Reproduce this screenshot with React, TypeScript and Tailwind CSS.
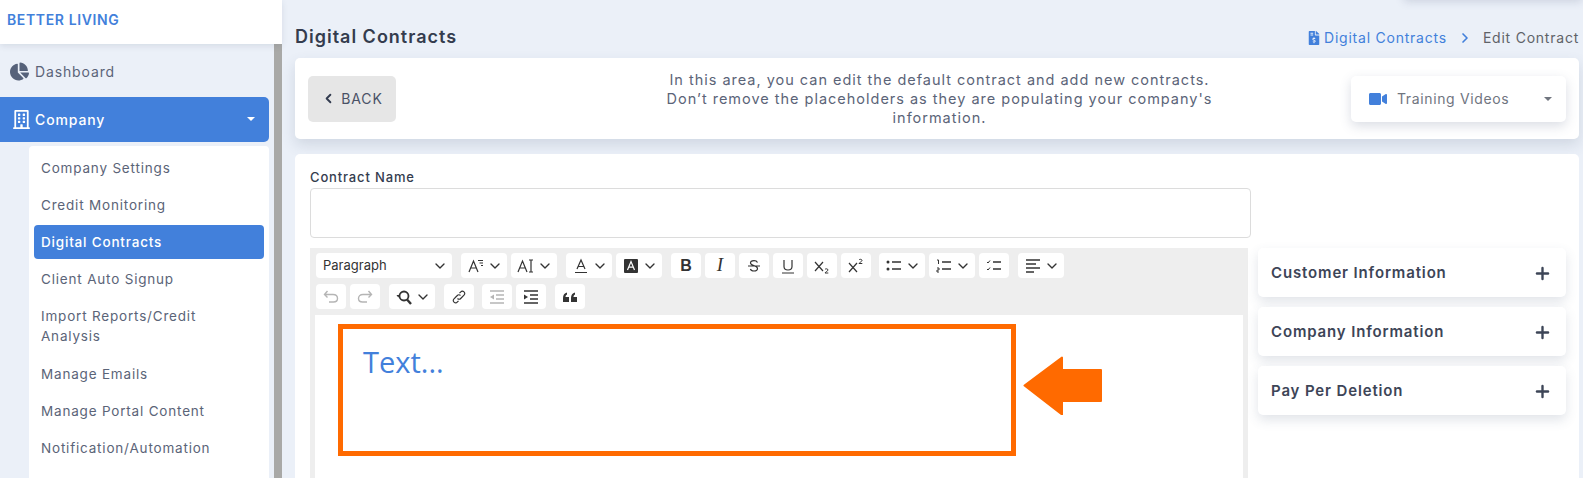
import { ChevronDown, ChevronLeft, ChevronRight, Plus } from "lucide-react";
import { ReactNode } from "react";
import { FaChartPie, FaFileInvoiceDollar, FaRegBuilding, FaVideo } from "react-icons/fa";

const SUB_ITEMS = [
  "Company Settings",
  "Credit Monitoring",
  "Digital Contracts",
  "Client Auto Signup",
  "Import Reports/Credit Analysis",
  "Manage Emails",
  "Manage Portal Content",
  "Notification/Automation",
];

function Icon({ children, color = "#333" }: { children: ReactNode; color?: string }) {
  return (
    <svg width="20" height="20" viewBox="0 0 20 20" fill="none" stroke={color} strokeWidth="1.2">
      {children}
    </svg>
  );
}

// one toolbar button, wide when it has a dropdown arrow
function Btn({ children, drop }: { children: ReactNode; drop?: boolean }) {
  return (
    <div className={`flex h-[25px] items-center justify-center rounded-[4px] bg-white ${drop ? "w-[46px]" : "w-[30px]"}`}>
      {children}
      {drop && <ChevronDown size={16} strokeWidth={2} className="ml-[1px] text-[#333]" />}
    </div>
  );
}

function Toolbar() {
  return (
    <div className="flex h-[67px] flex-col gap-[6px] bg-[#eeeeee] pl-[6px] pt-[5px]">
      <div className="flex items-center">
        <div className="flex h-[25px] w-[136px] items-center justify-between rounded-[4px] bg-white pl-[7px] pr-[4px] font-['Inter',sans-serif] text-[13px] text-[#333]">
          Paragraph
          <ChevronDown size={16} strokeWidth={2} />
        </div>
        <div className="ml-[9px] flex gap-[4px]">
          <Btn drop>
            <Icon>
              <path d="M3 16 7.5 5 12 16M4.8 12h5.6M12 4.5h5M13.500 7h3.500M15 9.500h2" />
            </Icon>
          </Btn>
          <Btn drop>
            <Icon>
              <path d="M2 16 6.500 5 11 16M3.800 12h5.400M15 4v12M13 4h4M13 16h4" />
            </Icon>
          </Btn>
        </div>
        <div className="ml-[9px] flex gap-[4px]">
          <Btn drop>
            <Icon>
              <path d="M6 13 10 4l4 9M7.300 10.500h5.400M4 16.500h12" />
            </Icon>
          </Btn>
          <Btn drop>
            <svg width="20" height="20" viewBox="0 0 20 20">
              <rect x="3" y="3" width="14" height="14" rx="1" fill="#333" />
              <path d="M6.500 14 10 5.500l3.500 8.500M7.800 11.200h4.400" fill="none" stroke="#fff" strokeWidth="1.200" />
            </svg>
          </Btn>
        </div>
        <div className="ml-[9px] flex gap-[4px]">
          <Btn>
            <span className="font-['Liberation_Sans',sans-serif] text-[16px] font-bold text-[#333]">B</span>
          </Btn>
          <Btn>
            <span className="font-['Liberation_Serif',serif] text-[19px] italic text-[#333]">I</span>
          </Btn>
          <Btn>
            <Icon>
              <path d="M13.500 6.500c-.5-1-1.800-1.800-3.500-1.800-2 0-3.500.8-3.500 2.300 0 2.800 7 2.200 7 5.500 0 1.500-1.600 2.500-3.500 2.500-1.800 0-3.200-.7-3.600-2M4 10h12" />
            </Icon>
          </Btn>
          <Btn>
            <Icon>
              <path d="M6 4v6.500c0 2.300 1.700 3.500 4 3.500s4-1.200 4-3.500V4M4 17h12" />
            </Icon>
          </Btn>
          <Btn>
            <Icon>
              <path d="m3 6 8 9M11 6l-8 9" strokeWidth="1.200" />
              <path d="M13 13.500c.3-1 3-1 3 .5 0 1-2.500 1.800-3 3h3.300" strokeWidth="1" />
            </Icon>
          </Btn>
          <Btn>
            <Icon>
              <path d="m3 7 8 9M11 7l-8 9" strokeWidth="1.200" />
              <path d="M13 4c.3-1 3-1 3 .5 0 1-2.500 1.800-3 3h3.300" strokeWidth="1" />
            </Icon>
          </Btn>
        </div>
        <div className="ml-[8px] flex gap-[4px]">
          <Btn drop>
            <Icon>
              <circle cx="4" cy="6" r="1.500" fill="#333" stroke="none" />
              <circle cx="4" cy="13" r="1.500" fill="#333" stroke="none" />
              <path d="M8 6h9M8 13h9" strokeWidth="1.500" />
            </Icon>
          </Btn>
          <Btn drop>
            <Icon>
              <path d="M3 4h1.500v4M3 12h2v2H3v2h2" strokeWidth="1" />
              <path d="M8 6h9M8 13h9" strokeWidth="1.500" />
            </Icon>
          </Btn>
          <Btn>
            <Icon>
              <path d="m3 6 1 1 2-2.500M3 13l1 1 2-2.500" strokeWidth="1" />
              <path d="M9 6h8M9 13h8" strokeWidth="1.500" />
            </Icon>
          </Btn>
        </div>
        <div className="ml-[9px]">
          <Btn drop>
            <Icon>
              <path d="M3 4h14M3 8h10M3 12h14M3 16h8" strokeWidth="1.300" />
            </Icon>
          </Btn>
        </div>
      </div>
      <div className="flex items-center">
        <div className="flex gap-[4px]">
          <Btn>
            <Icon color="#b5b5b5">
              <path d="M6.500 4 3.500 7.500l3 3M3.500 7.500H12c3 0 4.500 1.800 4.500 4s-1.500 3.500-4 3.500H8" strokeWidth="1.400" />
            </Icon>
          </Btn>
          <Btn>
            <Icon color="#b5b5b5">
              <path d="m13.500 4 3 3.500-3 3M16.500 7.500H8c-3 0-4.500 1.800-4.500 4S5 15 7.500 15H12" strokeWidth="1.400" />
            </Icon>
          </Btn>
        </div>
        <div className="ml-[9px]">
          <Btn drop>
            <Icon>
              <circle cx="10" cy="9" r="4.500" strokeWidth="1.800" />
              <path d="m13 12.500 4 4.500" strokeWidth="2.400" />
              <path d="M2.500 8h3.500L4.200 10.500Z" fill="#333" stroke="none" />
            </Icon>
          </Btn>
        </div>
        <div className="ml-[9px] flex">
          <Btn>
            <Icon>
              <path d="M8.500 11.500c1 1 2.300 1 3.200 0l3.300-3.300c1-1 1-2.400 0-3.300s-2.300-1-3.200 0l-1.300 1.300M11.500 8.500c-1-1-2.300-1-3.200 0L5 11.800c-1 1-1 2.400 0 3.300s2.300 1 3.200 0l1.300-1.300" />
            </Icon>
          </Btn>
        </div>
        <div className="ml-[8px] flex gap-[4px]">
          <Btn>
            <Icon color="#b5b5b5">
              <path d="M3 4h14M9 8h8M9 12h8M3 16h14" strokeWidth="1.400" />
              <path d="M7 7.500v5L3 10Z" fill="#b5b5b5" stroke="none" />
            </Icon>
          </Btn>
          <Btn>
            <Icon>
              <path d="M3 4h14M9 8h8M9 12h8M3 16h14" strokeWidth="1.500" />
              <path d="M3 7.500v5L7 10Z" fill="#333" stroke="none" />
            </Icon>
          </Btn>
        </div>
        <div className="ml-[9px]">
          <Btn>
            <svg width="20" height="20" viewBox="0 0 20 20" fill="#333">
              <path d="M3 15v-4c0-3 1.500-5 4-5.500v2C6 8 5.500 8.800 5.500 10H9v5ZM11 15v-4c0-3 1.500-5 4-5.500v2c-1 .5-1.500 1.300-1.500 2.500H17v5Z" />
            </svg>
          </Btn>
        </div>
      </div>
    </div>
  );
}

function Sidebar() {
  return (
    <aside className="flex h-full w-[282px] shrink-0 flex-col">
      <div className="z-10 flex h-[44px] shrink-0 items-center bg-white pb-[5px] pl-[7px] text-[14px] font-semibold tracking-[0.044em] text-[#4280db] shadow-[0_2px_6px_rgba(60,70,100,0.12)]">
        BETTER LIVING
      </div>
      <div className="flex min-h-0 flex-1">
        <nav className="w-[274px] pt-[1px]">
          <div className="flex h-[52px] items-center gap-[6px] pl-[10px] text-[14px] tracking-[0.062em] text-[#5b6478]">
            <FaChartPie size={19} className="text-[#56627a]" />
            Dashboard
          </div>
          <div className="flex h-[45px] w-[269px] items-center rounded-r-[5px] bg-[#4280db] pb-[1px] pl-[12px] pr-[14px] text-[14px] font-medium tracking-[0.062em] text-white">
            <FaRegBuilding size={19} />
            <span className="ml-[4px] flex-1">Company</span>
            <div className="h-0 w-0 border-x-[4px] border-t-[4px] border-x-transparent border-t-white" />
          </div>
          <div className="ml-[29px] mt-[4px] flex w-[240px] flex-col gap-[3px] rounded-t-[4px] bg-white px-[5px] pb-[40px] pt-[5px]">
            {SUB_ITEMS.map((item) => (
              <div
                key={item}
                className={`rounded-[4px] pl-[7px] pr-[30px] pt-[7px] text-[13.5px] leading-[20px] tracking-[0.06em] ${
                  item === "Digital Contracts" ? "bg-[#4280db] font-medium text-white" : "text-[#5b6478]"
                } ${item.startsWith("Import") ? "pb-[8px]" : "pb-[7px]"}`}
              >
                {item}
              </div>
            ))}
          </div>
        </nav>
        <div className="w-[8px] bg-[#a9a9a7]" />
      </div>
    </aside>
  );
}

function InfoCard() {
  return (
    <section className="flex h-[81px] items-center justify-between rounded-[5px] bg-white px-[13px] shadow-[0_6px_14px_rgba(70,85,120,0.16)]">
      <button className="flex h-[46px] w-[88px] items-center justify-center gap-[5px] rounded-[5px] bg-[#e6e6e6] text-[14px] tracking-[0.06em] text-[#4a5266]">
        <ChevronLeft size={15} strokeWidth={3} className="text-[#333c50]" />
        BACK
      </button>
      <p className="ml-[132px] text-center text-[14.5px] leading-[19px] tracking-[0.068em] text-[#5b6478]">
        In this area, you can edit the default contract and add new contracts.
        <br />
        Don’t remove the placeholders as they are populating your company's
        <br />
        information.
      </p>
      <div className="flex h-[46px] w-[215px] items-center rounded-[5px] bg-white pl-[18px] pr-[14px] text-[14px] tracking-[0.045em] text-[#70757f] shadow-[0_4px_12px_rgba(70,85,120,0.2)]">
        <FaVideo size={18} className="text-[#4280db]" />
        <span className="ml-[10px] flex-1">Training Videos</span>
        <div className="h-0 w-0 border-x-[4px] border-t-[4px] border-x-transparent border-t-[#70757f]" />
      </div>
    </section>
  );
}

function EditorArea() {
  return (
    <div className="w-[938px] shrink-0 bg-[#eeeeee]">
      <Toolbar />
      <div className="ml-[5px] mr-[5px] flex h-[200px] items-start bg-white pl-[23px] pt-[9px]">
        <div className="h-[132px] w-[678px] border-[5px] border-[#ff6a00] pl-[20px] pt-[13px] font-['Open_Sans',sans-serif] text-[29px] leading-[40px] text-[#4280db]">
          Text...
        </div>
        <svg width="79" height="59" viewBox="0 0 79 59" className="ml-[7px] mt-[32px]">
          <path d="M1.500 29.500 39 1.500v12.500h39v31H39v13.500Z" fill="#ff6a00" stroke="#ff6a00" strokeWidth="2" strokeLinejoin="round" />
        </svg>
      </div>
    </div>
  );
}

function Accordion({ title }: { title: string }) {
  return (
    <div className="flex h-[49px] items-center justify-between rounded-[5px] bg-white pl-[13px] pr-[14px] pt-[2px] text-[15px] font-semibold tracking-[0.057em] text-[#3d4557] shadow-[0_5px_12px_rgba(70,85,120,0.16)]">
      {title}
      <Plus size={19} strokeWidth={3} className="text-[#3d4557]" />
    </div>
  );
}

export default function App() {
  return (
    <div className="relative flex h-[478px] w-[1583px] overflow-hidden bg-[#ebf0f8] font-['Inter',sans-serif]">
      <div className="absolute right-0 top-[-30px] h-[30px] w-[180px] rounded-[5px] shadow-[0_2px_8px_rgba(70,85,120,0.18)]" />
      <Sidebar />
      <main className="flex min-w-0 flex-1 flex-col pl-[13px] pr-[4px]">
        <header className="flex h-[58px] shrink-0 items-end justify-between pb-[10px]">
          <h1 className="text-[18px] font-semibold leading-[22px] tracking-[0.055em] text-[#343c4e]">Digital Contracts</h1>
          <div className="flex items-center text-[14px] leading-[20px] tracking-[0.055em]">
            <FaFileInvoiceDollar size={14} className="text-[#4280db]" />
            <span className="ml-[3px] text-[#4280db]">Digital Contracts</span>
            <ChevronRight size={16} strokeWidth={2.500} className="mx-[10px] text-[#4280db]" />
            <span className="text-[#5f6368]">Edit Contract</span>
          </div>
        </header>
        <InfoCard />
        <section className="mt-[15px] min-h-0 flex-1 rounded-t-[5px] bg-white pl-[15px] pt-[15px]">
          <label className="block text-[13px] font-medium leading-[16px] tracking-[0.065em] text-[#343c4e]">Contract Name</label>
          <div className="mt-[3px] h-[50px] w-[941px] rounded-[4px] border border-[#dcdcdc]" />
          <div className="mt-[10px] flex">
            <EditorArea />
            <div className="ml-[10px] flex w-[308px] flex-col gap-[10px]">
              <Accordion title="Customer Information" />
              <Accordion title="Company Information" />
              <Accordion title="Pay Per Deletion" />
            </div>
          </div>
        </section>
      </main>
    </div>
  );
}
